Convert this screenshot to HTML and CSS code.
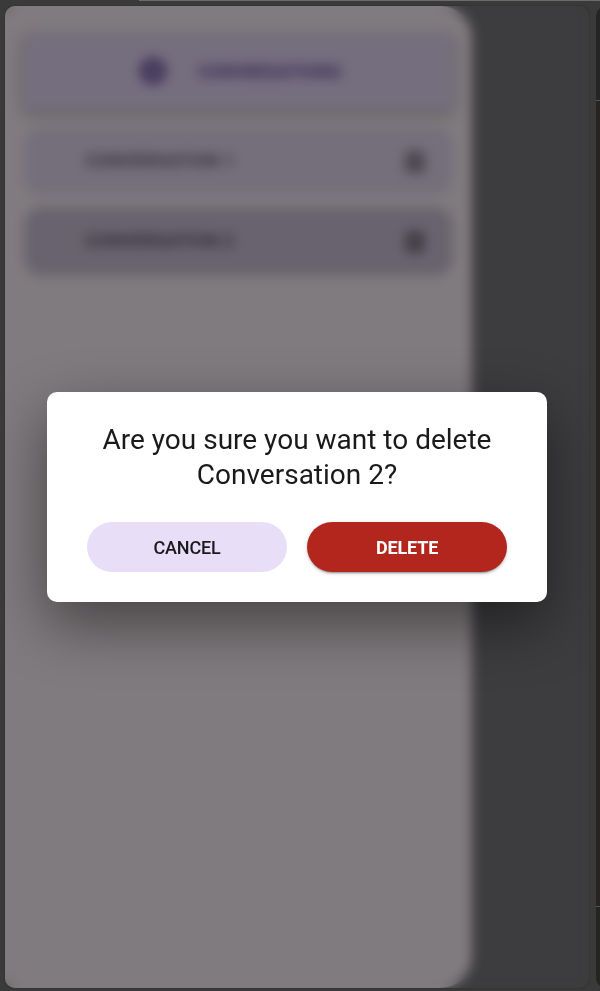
FILE: index.html
```html
<!DOCTYPE html>
<html lang="en">
<head>
<meta charset="utf-8">
<title>Delete conversation</title>
<link rel="stylesheet" href="styles.css">
</head>
<body>
<div class="desktop">
  <div class="top-edge"></div>
  <main class="window">
    <aside class="drawer">
      <div class="drawer-header">
        <svg class="add-icon" width="30" height="30" viewBox="0 0 30 30" aria-hidden="true">
          <circle cx="15" cy="15" r="13.5" fill="currentColor"/>
          <path d="M15 9v12M9 15h12" stroke="#766f7f" stroke-width="2"/>
        </svg>
        <span>CONVERSATIONS</span>
      </div>
      <div class="row">
        <span>CONVERSATION 1</span>
        <svg width="32" height="32" viewBox="0 0 24 24" aria-hidden="true"><path fill="currentColor" d="M4.500 7h15v12a2 2 0 0 1-2 2h-11a2 2 0 0 1-2-2zM20 5.500h-4.500l-1-2h-5l-1 2H4V7h16z"/></svg>
      </div>
      <div class="row selected">
        <span>CONVERSATION 2</span>
        <svg width="32" height="32" viewBox="0 0 24 24" aria-hidden="true"><path fill="currentColor" d="M4.500 7h15v12a2 2 0 0 1-2 2h-11a2 2 0 0 1-2-2zM20 5.500h-4.500l-1-2h-5l-1 2H4V7h16z"/></svg>
      </div>
    </aside>
    <div class="overlay">
      <section class="dialog" role="dialog">
        <h1>Are you sure you want to delete Conversation 2?</h1>
        <div class="actions">
          <button class="cancel">CANCEL</button>
          <button class="delete">DELETE</button>
        </div>
      </section>
    </div>
  </main>
  <div class="neighbor"></div>
</div>
</body>
</html>
```
FILE: styles.css
```css
* { box-sizing: border-box; }
body { margin: 0; background: #3a3a3a; font-family: Roboto, sans-serif; overflow: hidden; }
.desktop {
  position: relative;
  display: flex;
  gap: 7px;
  width: 600px;
  height: 991px;
  padding: 6px 0 3px 5px;
  overflow: hidden;
}
.top-edge { position: absolute; top: 0; left: 139px; right: 0; height: 1px; background: #6a6b6b; }
.window {
  position: relative;
  flex: 0 0 584px;
  overflow: hidden;
  border-radius: 10px;
  background: #3d3c3e;
  box-shadow: 0 0 1px 1px #363636;
}
.drawer {
  display: flex;
  flex-direction: column;
  width: 467px;
  height: 100%;
  padding: 29px 19px 0 19px;
  background: #807b7e;
  border-radius: 0 32px 32px 0;
}
.drawer-header {
  display: flex;
  align-items: center;
  gap: 30px;
  height: 75px;
  margin: 0 0 17px;
  padding: 0 0 3px 114px;
  background: #756e7e;
  color: #40335a;
  font-size: 18px;
  font-weight: 900;
  letter-spacing: -.25px;
  box-shadow: 0 3px 12px rgba(0,0,0,.3);
}
.row {
  display: flex;
  align-items: center;
  justify-content: space-between;
  height: 69px;
  margin-bottom: 11px;
  padding: 0 22px 2px 61px;
  background: #756f7c;
  color: #37343e;
  border-radius: 18px;
  font-size: 18px;
  font-weight: 700;
  letter-spacing: .05px;
}
.row svg { color: #4c4852; }
.row.selected { background: #69636f; color: #302d37; }
.row.selected svg { color: #434049; }
.overlay {
  position: absolute;
  inset: 0;
  display: flex;
  padding: 386px 42px 0;
  align-items: flex-start;
  backdrop-filter: blur(6px);
}
.dialog {
  width: 500px;
  height: 210px;
  padding: 30px 40px;
  background: #fff;
  border-radius: 10px;
  box-shadow: 0 22px 60px rgba(0,0,0,.46);
}
h1 {
  margin: 0 0 30px;
  color: #1a1a1a;
  font-size: 28px;
  font-weight: 400;
  line-height: 35px;
  text-align: center;
}
.actions { display: flex; gap: 20px; }
button {
  flex: 0 0 200px;
  height: 50px;
  padding: 0;
  border: 0;
  border-radius: 25px;
  font: 500 18px Roboto, sans-serif;
  letter-spacing: -.15px;
}
.cancel { background: #e8def8; color: #1a1a1a; }
.delete {
  background: #b3261e;
  color: #fff;
  font-weight: 700;
  box-shadow: 0 3px 1px -2px rgba(0,0,0,.2), 0 2px 2px rgba(0,0,0,.14), 0 1px 5px rgba(0,0,0,.12);
}
.neighbor {
  flex: 0 0 40px;
  border-radius: 10px;
  background: linear-gradient(#242424 0 94px, #555 94px 95px, #252423 95px 900px, #555 900px 901px, #242422 901px);
}
```
